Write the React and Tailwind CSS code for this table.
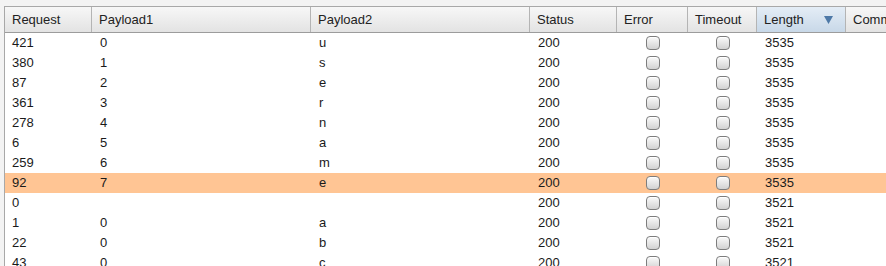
import React from "react";

const cols = [
  { key: "req", label: "Request", w: "w-[87px]" },
  { key: "p1", label: "Payload1", w: "w-[219px]" },
  { key: "p2", label: "Payload2", w: "w-[219px]" },
  { key: "status", label: "Status", w: "w-[87px]" },
  { key: "err", label: "Error", w: "w-[71px]" },
  { key: "to", label: "Timeout", w: "w-[69px]" },
  { key: "len", label: "Length", w: "w-[89px]" },
  { key: "com", label: "Comm", w: "w-[60px]" },
];

const rows = [
  ["421", "0", "u", "3535"],
  ["380", "1", "s", "3535"],
  ["87", "2", "e", "3535"],
  ["361", "3", "r", "3535"],
  ["278", "4", "n", "3535"],
  ["6", "5", "a", "3535"],
  ["259", "6", "m", "3535"],
  ["92", "7", "e", "3535"],
  ["0", "", "", "3521"],
  ["1", "0", "a", "3521"],
  ["22", "0", "b", "3521"],
  ["43", "0", "c", "3521"],
];

function Check() {
  return (
    <div className="w-[14px] h-[14px] rounded-[4px] border border-[#7d7d7d] bg-gradient-to-b from-[#fbfbfb] to-[#d2d2d2] shadow-[inset_0_1px_0_#ffffff]" />
  );
}

export default function App() {
  return (
    <div className="w-[886px] h-[266px] overflow-hidden bg-[#f3f3f3] pt-[6px] pl-[4px] font-['Liberation_Sans',Arial,sans-serif]">
      <div className="border-l border-t border-[#a8a8a8] bg-white h-[300px] text-[13px] text-[#1a1a1a]">
        <div className="flex h-[26px] border-b border-[#9c9c9c]">
          {cols.map((c) => (
            <div
              key={c.key}
              className={`${c.w} shrink-0 flex items-center pl-[7px] pr-[8px] border-r border-[#b4b4b4] ${
                c.key === "len"
                  ? "bg-gradient-to-b from-[#e4edf6] to-[#c8d8e8] justify-between"
                  : "bg-gradient-to-b from-[#f7f7f7] to-[#e3e3e3]"
              }`}
            >
              <span className="text-[#222]">{c.label}</span>
              {c.key === "len" && (
                <svg width="9" height="8" viewBox="0 0 9 8" className="mr-[4px]">
                  <polygon points="0,0 9,0 4.5,8" fill="#4e79a7" />
                </svg>
              )}
            </div>
          ))}
        </div>
        {rows.map((r, i) => (
          <div
            key={i}
            className={`flex h-[20px] items-center ${i === 7 ? "bg-[#ffc594]" : ""}`}
          >
            <div className="w-[87px] shrink-0 pl-[7px]">{r[0]}</div>
            <div className="w-[219px] shrink-0 pl-[8px]">{r[1]}</div>
            <div className="w-[219px] shrink-0 pl-[8px]">{r[2]}</div>
            <div className="w-[87px] shrink-0 pl-[8px]">200</div>
            <div className="w-[71px] shrink-0 flex justify-center pl-[1px]">
              <Check />
            </div>
            <div className="w-[69px] shrink-0 flex justify-center">
              <Check />
            </div>
            <div className="w-[89px] shrink-0 pl-[8px]">{r[3]}</div>
          </div>
        ))}
      </div>
    </div>
  );
}
